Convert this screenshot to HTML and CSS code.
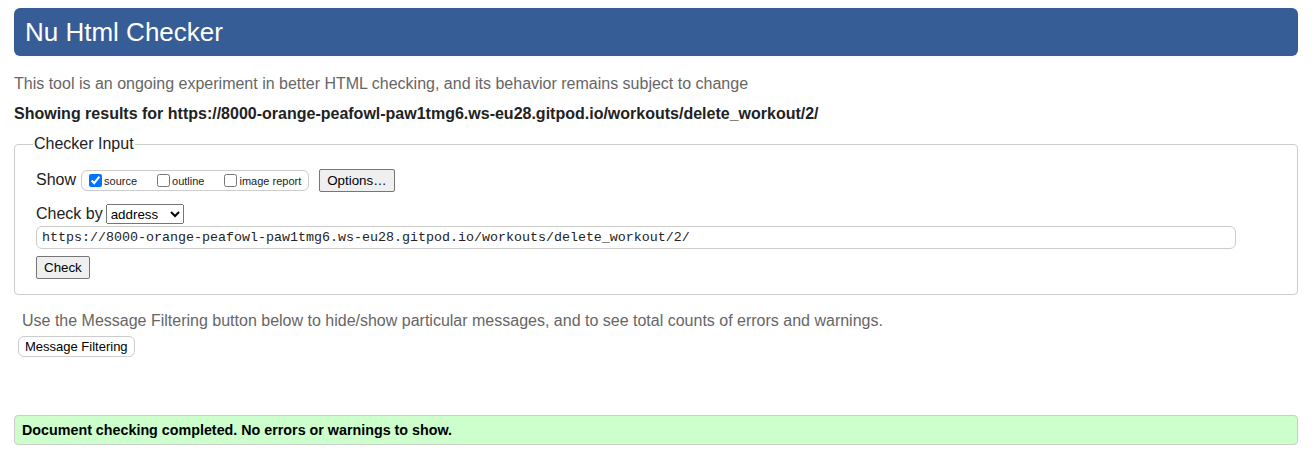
FILE: index.html
```html
<!DOCTYPE html>
<html>
<head>
<meta charset="utf-8">
<title>Nu Html Checker</title>
<link rel="stylesheet" href="styles.css">
</head>
<body>
<h1 class="title">Nu Html Checker</h1>
<p class="intro">This tool is an ongoing experiment in better HTML checking, and its behavior remains subject to change</p>
<p class="results">Showing results for https://8000-orange-peafowl-paw1tmg6.ws-eu28.gitpod.io/workouts/delete_workout/2/</p>
<fieldset class="input-box">
  <legend class="legend">Checker Input</legend>
  <div class="show-row">
    <span class="label">Show</span>
    <span class="show-group">
      <label class="opt"><input type="checkbox" checked class="cb">source</label>
      <label class="opt"><input type="checkbox" class="cb">outline</label>
      <label class="opt"><input type="checkbox" class="cb">image report</label>
    </span>
    <button class="btn btn-options">Options…</button>
  </div>
  <div class="checkby-row">
    <span class="label">Check by</span>
    <select class="sel"><option>address</option></select>
  </div>
  <input class="url" type="text" value="https://8000-orange-peafowl-paw1tmg6.ws-eu28.gitpod.io/workouts/delete_workout/2/">
  <div class="check-row"><button class="btn btn-check">Check</button></div>
</fieldset>
<p class="filter-note">Use the Message Filtering button below to hide/show particular messages, and to see total counts of errors and warnings.</p>
<button class="btn-filter">Message Filtering</button>
<div class="success">Document checking completed. No errors or warnings to show.</div>
</body>
</html>
```
FILE: styles.css
```css
html, body { background: #fff; }
body {
  margin: 8px 17px 8px 14px;
  font-family: "Liberation Sans", Arial, sans-serif;
  font-size: 16px;
  color: #222;
}
.title {
  margin: 0;
  background: #365d95;
  color: #fff;
  font-weight: normal;
  font-size: 26px;
  line-height: 28px;
  padding: 10px 11px;
  border-radius: 6px;
}
.intro {
  margin: 19px 0 0;
  color: #666;
  line-height: 18px;
}
.results {
  margin: 12px 0 0;
  font-weight: bold;
  line-height: 18px;
}
.input-box {
  margin: 12px 0 0;
  border: 1px solid #ccc;
  border-radius: 4px;
  padding: 14px 21px 15px 21px;
}
.legend {
  padding: 0 1px;
  margin-left: -3px;
  font-size: 16px;
  color: #222;
}
.show-row {
  display: flex;
  align-items: center;
  height: 26px;
}
.label { margin-right: 5px; }
.show-group {
  display: inline-flex;
  align-items: center;
  box-sizing: border-box;
  border: 1px solid #ccc;
  border-radius: 6px;
  height: 21px;
  padding: 0 7px 0 3px;
  font-size: 11px;
  color: #222;
}
.opt { display: inline-flex; align-items: center; margin-right: 16px; padding-top: 2px; }
.opt:last-child { margin-right: 0; }
.cb { margin: 0 2px 2px 4px; width: 13px; height: 13px; }
.btn {
  font-family: "Liberation Sans", Arial, sans-serif;
  font-size: 13.333px;
  color: #000;
  background: #efefef;
  border: 1px solid #767676;
  border-radius: 2px;
  padding: 1px 7px;
  height: 23px;
}
.btn-options { margin-left: 10px; }
.checkby-row {
  display: flex;
  align-items: center;
  margin-top: 11px;
}
.checkby-row .label { margin-right: 3px; }
.sel {
  font-family: "Liberation Sans", Arial, sans-serif;
  font-size: 13.333px;
  width: 78px;
  height: 20px;
}
.url {
  display: block;
  box-sizing: border-box;
  width: 1200px;
  height: 23px;
  margin-top: 2px;
  border: 1px solid #ccc;
  border-radius: 6px;
  font-family: "Liberation Mono", "Courier New", monospace;
  font-size: 13.333px;
  padding: 0 5px;
  color: #222;
}
.check-row { margin-top: 7px; height: 23px; }
.filter-note {
  margin: 17px 0 0 8px;
  color: #666;
  line-height: 18px;
}
.btn-filter {
  margin: 6px 0 0 4px;
  font-family: "Liberation Sans", Arial, sans-serif;
  font-size: 13px;
  color: #000;
  background: #fff;
  border: 1px solid #ccc;
  border-radius: 6px;
  height: 21px;
  padding: 0 6px;
}
.success {
  margin-top: 58px;
  background: #cfc;
  border: 1px solid #ccc;
  border-radius: 4px;
  padding: 0 7px;
  height: 28px;
  line-height: 28px;
  font-size: 14.3px;
  font-weight: bold;
  color: #000;
}
```
